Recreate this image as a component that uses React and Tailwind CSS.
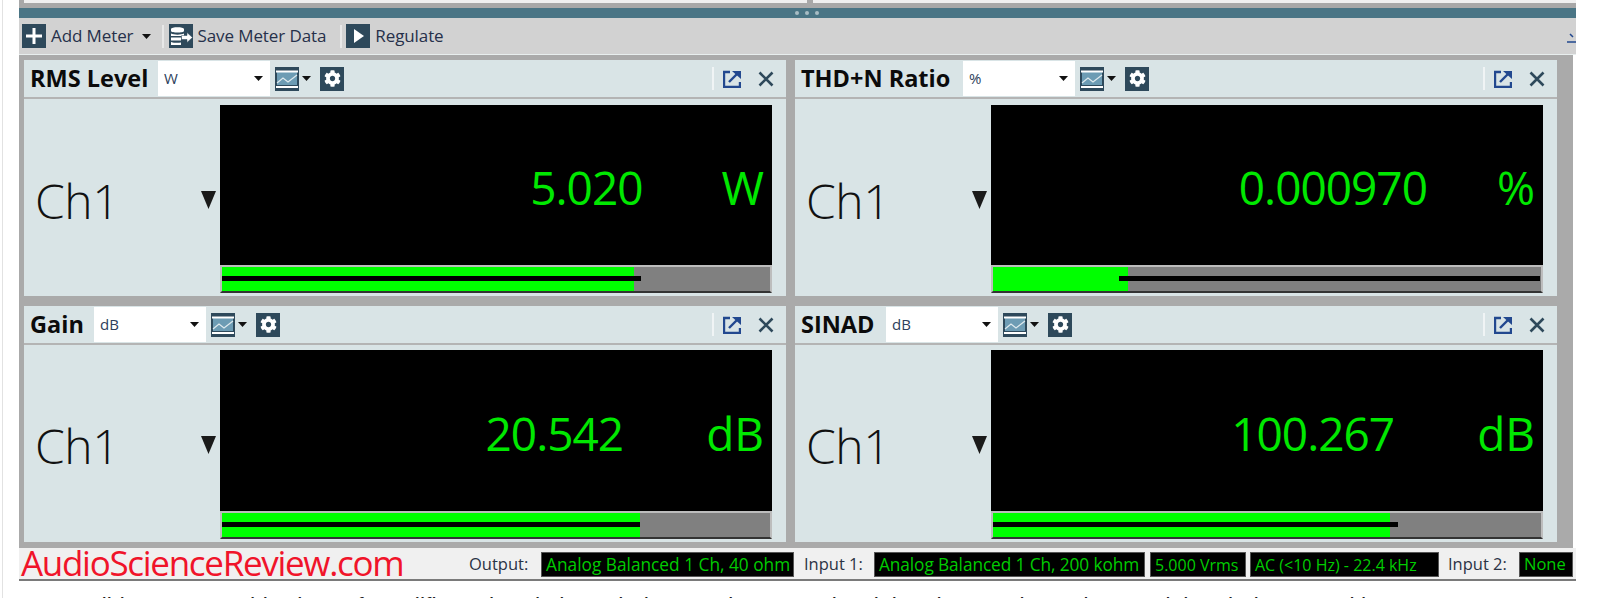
import React from 'react';
import { FaCog } from 'react-icons/fa';

const uiFont = "font-['Open_Sans','Noto_Sans',sans-serif]";

const meters = [
  {
    title: 'RMS Level', unit: 'W', value: '5.020', titleClass: 'w-[128px]', valueClass: 'mr-[79px]',
    unitClass: 'mr-[8px]', bodyClass: 'pt-[6px]', screenClass: 'h-[160px]',
    green: 75.1, lineFrom: 0, lineTo: 76.4,
  },
  {
    title: 'THD+N Ratio', unit: '%', value: '0.000970', titleClass: 'w-[162px]', valueClass: 'mr-[70px]',
    unitClass: 'mr-[8px]', bodyClass: 'pt-[6px]', screenClass: 'h-[160px]',
    green: 24.6, lineFrom: 23, lineTo: 99.9,
  },
  {
    title: 'Gain', unit: 'dB', value: '20.542', titleClass: 'w-[64px]', valueClass: 'mr-[83px]',
    unitClass: 'mr-[8px]', bodyClass: 'pt-[5px]', screenClass: 'h-[161px]',
    green: 76.2, lineFrom: 0, lineTo: 76.2,
  },
  {
    title: 'SINAD', unit: 'dB', value: '100.267', titleClass: 'w-[85px]', valueClass: 'mr-[83px]',
    unitClass: 'mr-[8px]', bodyClass: 'pt-[5px]', screenClass: 'h-[161px]',
    green: 72.5, lineFrom: 0, lineTo: 73.9,
  },
];

const Caret = () => (
  <svg width="9" height="5" viewBox="0 0 9 5" className="shrink-0">
    <path d="M0 0h9L4.5 5z" fill="#111" />
  </svg>
);

const AddIcon = () => (
  <svg width="24" height="24" viewBox="0 0 24 24" className="shrink-0">
    <rect width="24" height="24" fill="#2e495b" />
    <path d="M12 4v16M4 12h16" stroke="#fff" strokeWidth="3" />
  </svg>
);

// database stack with an arrow leaving it
const SaveIcon = () => (
  <svg width="24" height="24" viewBox="0 0 24 24" className="shrink-0">
    <rect width="24" height="24" fill="#2e495b" />
    <path d="M2 5C2 2.500 15 2.500 15 5V7C15 9 2 9 2 7zM2 9.500c3 1.500 10 1.500 13 0V12H2zM2 13.500h10V16.500H2zM2 18c3 1 7 1 10 .5V21H2z" fill="#fff" />
    <path d="M12.500 11.500H18V8.500l5.500 5-5.500 5v-3h-5.500z" fill="#fff" stroke="#2e495b" strokeWidth="0.500" />
  </svg>
);

const PlayIcon = () => (
  <svg width="24" height="24" viewBox="0 0 24 24" className="shrink-0">
    <rect width="24" height="24" fill="#2e495b" />
    <path d="M8 5l10 7-10 7z" fill="#fff" />
  </svg>
);

const ChartIcon = () => (
  <svg width="24" height="24" viewBox="0 0 24 24" className="shrink-0">
    <rect width="24" height="24" fill="#2e495b" />
    <rect x="2" y="5" width="20" height="13" fill="#6d9cb4" />
    <path d="M1 4.500h22M1 20h22" stroke="#fff" strokeWidth="2" />
    <path d="M2 16l6-5 5 4 9-7" stroke="#dfeaee" strokeWidth="1.200" fill="none" />
  </svg>
);

const GearIcon = () => (
  <div className="flex h-[24px] w-[24px] shrink-0 items-center justify-center bg-[#2e495b]">
    <FaCog className="h-[17px] w-[17px] text-white" />
  </div>
);

const PopOutIcon = () => (
  <svg width="18" height="18" viewBox="0 0 18 18" className="shrink-0">
    <path d="M7 2H1v15h16v-5" stroke="#22488f" strokeWidth="2.400" fill="none" />
    <path d="M6 12L14 4" stroke="#22488f" strokeWidth="2.400" />
    <path d="M9 1h9v8z" fill="#22488f" />
  </svg>
);

const CloseIcon = () => (
  <svg width="16" height="16" viewBox="0 0 16 16" className="shrink-0">
    <path d="M1.500 1.500l13 13M14.500 1.500l-13 13" stroke="#2e495b" strokeWidth="2.600" />
  </svg>
);

const MeterPanel = ({ meter }) => (
  <section className="flex h-[236px] flex-col bg-[#d9e4e6]">
    <header className="flex h-[39px] shrink-0 items-center border-b-2 border-[#b4b4b4] pl-[6px]">
      <h2 className={`${meter.titleClass} shrink-0 whitespace-nowrap text-[23.500px] font-bold leading-none text-[#0b0b0b]`}>
        {meter.title}
      </h2>
      <div className="flex h-[35px] w-[112px] shrink-0 items-center justify-between bg-white pl-[6px] pr-[7px]">
        <span className="text-[15px] text-[#2e3f5c]">{meter.unit}</span>
        <Caret />
      </div>
      <div className="ml-[5px] flex items-center gap-[3px]">
        <ChartIcon />
        <Caret />
      </div>
      <div className="ml-[9px]">
        <GearIcon />
      </div>
      <div className="ml-auto flex items-center">
        <div className="h-[23px] w-[2px] bg-[#f0f4f5]" />
        <div className="ml-[9px]"><PopOutIcon /></div>
        <div className="ml-[17px] mr-[12px]"><CloseIcon /></div>
      </div>
    </header>
    <div className={`flex flex-1 ${meter.bodyClass}`}>
      <div className="flex w-[196px] shrink-0 items-center justify-between pl-[11px] pr-[4px]">
        <span className="text-[48px] font-light leading-none tracking-[-0.5px] text-[#111]">Ch1</span>
        <svg width="15" height="18" viewBox="0 0 15 18" className="mb-[2px]">
          <path d="M0 0h15L7.500 18z" fill="#1a1a1a" />
        </svg>
      </div>
      <div className="w-[552px] shrink-0">
        <div className={`flex items-center justify-end bg-black pt-[4px] text-[#00e800] ${meter.screenClass}`}>
          <span className={`text-[46px] leading-none tracking-[-1px] ${meter.valueClass}`}>{meter.value}</span>
          <span className={`text-[46px] leading-none ${meter.unitClass}`}>{meter.unit}</span>
        </div>
        <div className="h-[28px] border-2 border-[#bdbdbd] border-b-[#333] bg-[#808080]">
          <div className="relative h-full">
            <div className="absolute inset-y-0 left-0 bg-[#00ff00]" style={{ width: `${meter.green}%` }} />
            <div
              className="absolute top-[9px] h-[5px] bg-black"
              style={{ left: `${meter.lineFrom}%`, width: `${meter.lineTo - meter.lineFrom}%` }}
            />
          </div>
        </div>
      </div>
    </div>
  </section>
);

const Status = ({ className, children }) => (
  <div className={`flex h-[25px] items-center whitespace-nowrap border border-[#555] bg-black pl-[4px] text-[#00cc00] ${className}`}>
    {children}
  </div>
);

const Label = ({ className, children }) => (
  <span className={`whitespace-nowrap text-[16.500px] text-[#2b3345] ${className}`}>{children}</span>
);

export default function App() {
  return (
    <div className={`h-[598px] w-[1598px] overflow-hidden bg-white ${uiFont}`}>
      <div className="ml-[2px] h-full border-l border-[#e2e2e2] pl-[16px]">
        <div className="w-[1557px]">
          {/* top of the panels above, cut by the crop */}
          <div className="flex h-[8px] border-b-4 border-[#a8a8a8] bg-[#a8a8a8] pl-[5px]">
            <div className="h-[3px] w-[783px] bg-[#f0f0f0]" />
            <div className="ml-[6px] h-[3px] flex-1 bg-[#f0f0f0]" />
          </div>
          <div className="flex h-[10px] items-center justify-center gap-[6px] bg-[#4a7585] pl-[19px]">
            <span className="h-[4px] w-[4px] rounded-full bg-[#a9bdc5]" />
            <span className="h-[4px] w-[4px] rounded-full bg-[#a9bdc5]" />
            <span className="h-[4px] w-[4px] rounded-full bg-[#a9bdc5]" />
          </div>
          <div className="flex h-[37px] items-center overflow-hidden border-b border-[#e8eeee] bg-[#d2d2d2] pl-[3px] text-[17px] tracking-[-0.1px] text-[#26304a]">
            <AddIcon />
            <span className="ml-[5px]">Add Meter</span>
            <div className="ml-[9px]"><Caret /></div>
            <div className="ml-[11px] h-[23px] w-[2px] bg-[#e8e8e8]" />
            <div className="ml-[5px]"><SaveIcon /></div>
            <span className="ml-[4px]">Save Meter Data</span>
            <div className="ml-[14px] h-[23px] w-[2px] bg-[#e8e8e8]" />
            <div className="ml-[4px]"><PlayIcon /></div>
            <span className="ml-[5px]">Regulate</span>
            <svg width="9" height="14" viewBox="0 0 9 14" className="ml-auto">
              <path d="M0 13h9M3 5l3 3" stroke="#22488f" strokeWidth="1.500" fill="none" />
            </svg>
          </div>
          <div className="mr-[3px] bg-[#aaaaaa] pb-[6px] pl-[5px] pr-[15px] pt-[5px]">
            <div className="grid grid-cols-[762px_762px] gap-x-[9px] gap-y-[10px]">
              {meters.map((meter) => (
                <MeterPanel key={meter.title} meter={meter} />
              ))}
            </div>
          </div>
          <footer className="flex h-[33px] items-center border-b-2 border-[#7a7a7a] bg-[#f0f0f0] pt-[2px]">
            <span className="mb-[4px] ml-[2px] w-[448px] shrink-0 whitespace-nowrap text-[35px] leading-none tracking-[-1.300px] text-[#f0142a]">
              AudioScienceReview.com
            </span>
            <Label className="w-[72px] shrink-0">Output:</Label>
            <div className="w-[253px] shrink-0"><Status className="text-[17.300px]">Analog Balanced 1 Ch, 40 ohm</Status></div>
            <Label className="ml-[10px] w-[70px] shrink-0">Input 1:</Label>
            <div className="w-[271px] shrink-0"><Status className="text-[17.300px] tracking-[-0.1px]">Analog Balanced 1 Ch, 200 kohm</Status></div>
            <div className="ml-[5px] w-[96px] shrink-0"><Status className="text-[16px]">5.000 Vrms</Status></div>
            <div className="ml-[4px] w-[189px] shrink-0"><Status className="text-[16px]">AC (&lt;10 Hz) - 22.4 kHz</Status></div>
            <Label className="ml-[9px] w-[71px] shrink-0">Input 2:</Label>
            <div className="w-[54px] shrink-0"><Status className="text-[16.500px]">None</Status></div>
          </footer>
        </div>
        <p className="mt-[13px] whitespace-nowrap font-['Liberation_Sans',sans-serif] text-[23px] leading-[26px] text-[#222]">
          Wow. I did not expect this class of amplifier to break through the 100 dB SINAD level, but the XLR input does and then it does so with ease
        </p>
      </div>
    </div>
  );
}
